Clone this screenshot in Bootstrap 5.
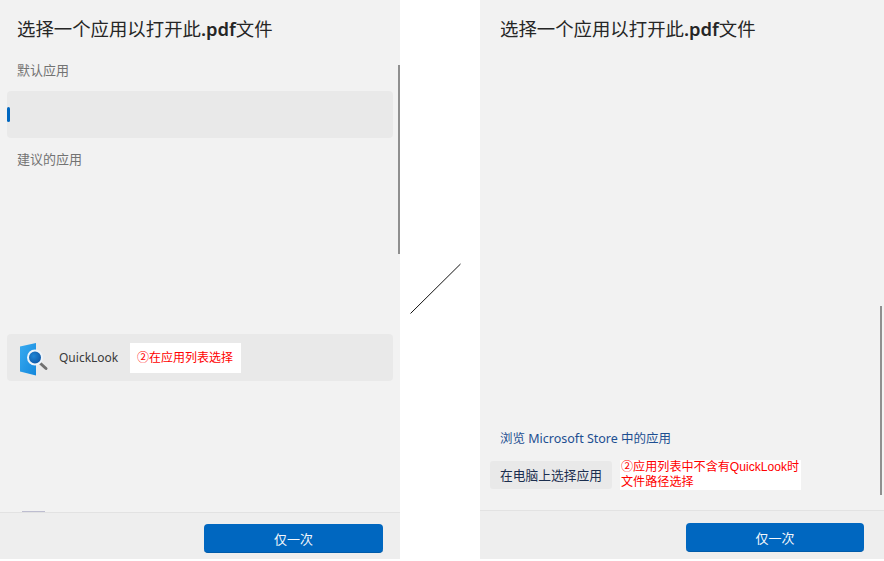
<!DOCTYPE html>
<html lang="zh">
<head>
<meta charset="utf-8">
<title>选择一个应用</title>
<link href="https://cdn.jsdelivr.net/npm/bootstrap@5.3.0/dist/css/bootstrap.min.css" rel="stylesheet">
<style>
html,body{background:#fff;margin:0;height:561px;overflow:hidden}
body{font-family:"Noto Sans","Noto Sans CJK SC",sans-serif}
.shot{width:884px;height:559px}
.pane{background:#f2f2f2;height:559px;position:relative;flex:none}
.pane-l{width:400px}
.pane-r{width:404px}
.gutter{width:80px;flex:none}
.gutter svg{display:block}
.pane-main{flex:1 1 auto;min-height:0;padding-top:16px}
.ttl{font-size:18.4px;line-height:25px;color:#262626;margin:0;font-weight:400}
.ttl b{font-weight:600}
.pane-l .ttl{padding-left:17px}
.pane-r .ttl{padding-left:20px}
.sect{font-size:13px;line-height:18px;color:#737373;padding-left:17px}
.s1{margin-top:20px}
.s2{margin-top:12px}
.tile{background:#e9e9e9;border-radius:4px;height:47px;width:386px;margin-left:7px;position:relative}
.t1{margin-top:12px}
.t2{margin-top:166px}
.bar-ind{position:absolute;left:0;top:16px;width:3px;height:15px;background:#0067c0;border-radius:2px}
.qicon{margin-left:12px;flex:none}
.qname{font-size:12px;color:#3a3a3a;margin-left:10px;width:71px;flex:none;white-space:nowrap}
.tag{background:#fff;color:#f00;font-family:"Liberation Sans","Noto Sans CJK SC",sans-serif;font-size:12px;flex:none}
.tag1{width:111px;height:30px;padding-left:7px;line-height:30px;white-space:nowrap}
.stub{position:absolute;left:22px;top:511px;width:23px;height:1px;background:#bdbdd0}
.foot{height:47px;background:#eeeeee;border-top:1px solid #e2e2e2;flex:none}
.pane-l .foot{padding:11px 17px 0 0}
.pane-r .foot{height:49px;padding:12px 20px 0 0}
.go{background:#0067c0;color:#f4f8fc;border:0;border-bottom:1px solid #005ba9;border-radius:4px;font-size:13px;line-height:30px;height:29px;padding:0;width:179px}
.pane-r .go{width:178px}
.store{font-size:12.5px;line-height:18px;color:#1d4f91;padding-left:20px;text-decoration:none;display:block}
.lower{margin-top:13px;padding-left:10px}
.pick{background:#e9e9e9;color:#1c2f4f;border:0;border-radius:3px;font-size:12.75px;width:122px;height:28px;padding:0;line-height:28px;flex:none}
.tag2{width:181px;height:30px;margin-left:8px;padding-left:1px;font-size:12.1px;line-height:14.5px;margin-top:-1px;white-space:nowrap}
.lift{padding-bottom:20px}
.thumb{position:absolute;width:2px;height:189px;background:#8f8f8f}
.th-l{left:398px;top:65px}
.th-r{left:400px;top:306px}
</style>
</head>
<body>
<div class="shot d-flex">
  <section class="pane pane-l d-flex flex-column">
    <div class="pane-main">
      <h1 class="ttl">选择一个应用以打开此<b>.pdf</b>文件</h1>
      <div class="sect s1">默认应用</div>
      <div class="tile t1"><span class="bar-ind"></span></div>
      <div class="sect s2">建议的应用</div>
      <div class="tile t2 d-flex align-items-center">
        <svg class="qicon" width="30" height="36" viewBox="0 0 30 36" aria-hidden="true">
          <defs>
            <linearGradient id="dr" x1="0" y1="0" x2="1" y2="1"><stop offset="0" stop-color="#38aaf0"/><stop offset="1" stop-color="#1488dc"/></linearGradient>
            <radialGradient id="ln" cx=".4" cy=".4" r=".7"><stop offset="0" stop-color="#1f86d6"/><stop offset="1" stop-color="#0b4f9e"/></radialGradient>
          </defs>
          <path d="M1 6.5 17 3V35.5L1 31.5Z" fill="url(#dr)"/>
          <path d="M21.5 23.5 27 28.5" stroke="#707070" stroke-width="3" stroke-linecap="round"/>
          <circle cx="16" cy="17.5" r="7" fill="url(#ln)" stroke="#eef4fa" stroke-width="2"/>
        </svg>
        <span class="qname">QuickLook</span>
        <span class="tag tag1">②在应用列表选择</span>
      </div>
    </div>
    <span class="stub"></span>
    <div class="foot d-flex justify-content-end"><button class="go" type="button">仅一次</button></div>
    <span class="thumb th-l"></span>
  </section>

  <div class="gutter" aria-hidden="true">
    <svg width="80" height="559" viewBox="0 0 80 559"><line x1="10.5" y1="313.5" x2="60.5" y2="264" stroke="#111" stroke-width="1"/></svg>
  </div>

  <section class="pane pane-r d-flex flex-column">
    <div class="pane-main d-flex flex-column">
      <h1 class="ttl">选择一个应用以打开此<b>.pdf</b>文件</h1>
      <div class="mt-auto lift">
        <a class="store" href="#">浏览 Microsoft Store 中的应用</a>
        <div class="lower d-flex align-items-start">
          <button class="pick" type="button">在电脑上选择应用</button>
          <span class="tag tag2">②应用列表中不含有QuickLook时<br>文件路径选择</span>
        </div>
      </div>
    </div>
    <div class="foot d-flex justify-content-end"><button class="go" type="button">仅一次</button></div>
    <span class="thumb th-r"></span>
  </section>
</div>
<script src="https://cdn.jsdelivr.net/npm/bootstrap@5.3.0/dist/js/bootstrap.bundle.min.js"></script>
</body>
</html>
